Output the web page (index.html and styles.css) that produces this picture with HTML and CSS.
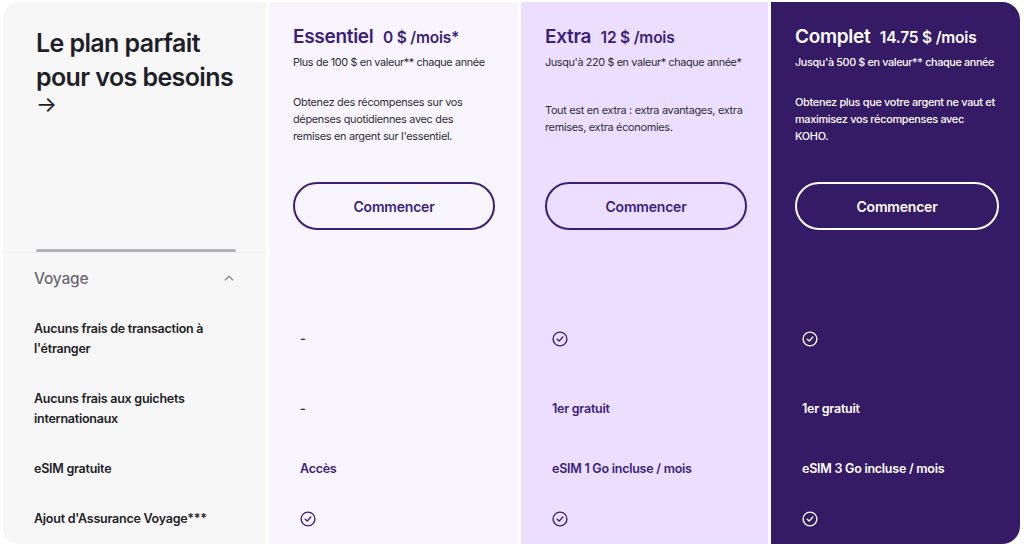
FILE: index.html
```html
<!DOCTYPE html>
<html lang="fr">
<head>
<meta charset="utf-8">
<title>Plans KOHO</title>
<link rel="stylesheet" href="styles.css">
</head>
<body>
<div class="table">
  <div class="col col-label">
    <div class="head head-label">
      <h1 class="page-title">Le plan parfait<br>pour vos besoins<span class="arrow">→</span></h1>
      <div class="rule"></div>
    </div>
    <div class="section">
      <span class="section-name">Voyage</span>
      <svg class="chev" width="10" height="6" viewBox="0 0 10 6"><path d="M1 5.2 L5 1.2 L9 5.2" fill="none" stroke="#8a8a90" stroke-width="1.3"/></svg>
    </div>
    <div class="row r2">Aucuns frais de transaction à<br>l'étranger</div>
    <div class="row r2">Aucuns frais aux guichets<br>internationaux</div>
    <div class="row r1">eSIM gratuite</div>
    <div class="row r1">Ajout d'Assurance Voyage***</div>
  </div>

  <div class="col plan plan-ess">
    <div class="head">
      <h2 class="plan-title">Essentiel <span class="price">0 $ /mois*</span></h2>
      <p class="plan-sub">Plus de 100 $ en valeur** chaque année</p>
      <div class="plan-desc"><p>Obtenez des récompenses sur vos<br>dépenses quotidiennes avec des<br>remises en argent sur l'essentiel.</p></div>
      <a class="btn">Commencer</a>
    </div>
    <div class="section"></div>
    <div class="row r2 val"><span class="dash">-</span></div>
    <div class="row r2 val"><span class="dash">-</span></div>
    <div class="row r1 val"><span class="strong">Accès</span></div>
    <div class="row r1 val"><svg class="check" width="16" height="16" viewBox="0 0 16 16"><circle cx="8" cy="8" r="6.9" fill="none" stroke="currentColor" stroke-width="1.4"/><path d="M5.2 8.2 L7.2 10.1 L10.8 6" fill="none" stroke="currentColor" stroke-width="1.4" stroke-linecap="round" stroke-linejoin="round"/></svg></div>
  </div>

  <div class="col plan plan-extra">
    <div class="head">
      <h2 class="plan-title">Extra <span class="price">12 $ /mois</span></h2>
      <p class="plan-sub">Jusqu'à 220 $ en valeur* chaque année*</p>
      <div class="plan-desc"><p>Tout est en extra : extra avantages, extra<br>remises, extra économies.</p></div>
      <a class="btn">Commencer</a>
    </div>
    <div class="section"></div>
    <div class="row r2 val"><svg class="check" width="16" height="16" viewBox="0 0 16 16"><circle cx="8" cy="8" r="6.9" fill="none" stroke="currentColor" stroke-width="1.4"/><path d="M5.2 8.2 L7.2 10.1 L10.8 6" fill="none" stroke="currentColor" stroke-width="1.4" stroke-linecap="round" stroke-linejoin="round"/></svg></div>
    <div class="row r2 val"><span class="strong">1er gratuit</span></div>
    <div class="row r1 val"><span class="strong">eSIM 1 Go incluse / mois</span></div>
    <div class="row r1 val"><svg class="check" width="16" height="16" viewBox="0 0 16 16"><circle cx="8" cy="8" r="6.9" fill="none" stroke="currentColor" stroke-width="1.4"/><path d="M5.2 8.2 L7.2 10.1 L10.8 6" fill="none" stroke="currentColor" stroke-width="1.4" stroke-linecap="round" stroke-linejoin="round"/></svg></div>
  </div>

  <div class="col plan plan-comp">
    <div class="head">
      <h2 class="plan-title">Complet <span class="price">14.75 $ /mois</span></h2>
      <p class="plan-sub">Jusqu'à 500 $ en valeur** chaque année</p>
      <div class="plan-desc"><p>Obtenez plus que votre argent ne vaut et<br>maximisez vos récompenses avec<br>KOHO.</p></div>
      <a class="btn">Commencer</a>
    </div>
    <div class="section"></div>
    <div class="row r2 val"><svg class="check" width="16" height="16" viewBox="0 0 16 16"><circle cx="8" cy="8" r="6.9" fill="none" stroke="currentColor" stroke-width="1.4"/><path d="M5.2 8.2 L7.2 10.1 L10.8 6" fill="none" stroke="currentColor" stroke-width="1.4" stroke-linecap="round" stroke-linejoin="round"/></svg></div>
    <div class="row r2 val"><span class="strong">1er gratuit</span></div>
    <div class="row r1 val"><span class="strong">eSIM 3 Go incluse / mois</span></div>
    <div class="row r1 val"><svg class="check" width="16" height="16" viewBox="0 0 16 16"><circle cx="8" cy="8" r="6.9" fill="none" stroke="currentColor" stroke-width="1.4"/><path d="M5.2 8.2 L7.2 10.1 L10.8 6" fill="none" stroke="currentColor" stroke-width="1.4" stroke-linecap="round" stroke-linejoin="round"/></svg></div>
  </div>
</div>
</body>
</html>
```

FILE: styles.css
```css
* { box-sizing: border-box; }
html, body { margin: 0; padding: 0; background: #ffffff; }
body {
  font-family: Inter, "Noto Sans", "Liberation Sans", sans-serif;
  color: #222226;
  -webkit-font-smoothing: antialiased;
}
.table {
  display: flex;
  gap: 3px;
  margin: 2px 0 0 3px;
  width: 1017px;
}
.col {
  display: flex;
  flex-direction: column;
}
.col-label {
  width: 263px;
  background: #f7f7f7;
  border-radius: 16px 0 0 16px;
}
.plan { width: 249px; }
.plan-ess { background: #f8f5fe; color: #3b1f78; }
.plan-extra { background: #ecdefe; color: #3b1f78; width: 247px; }
.plan-comp { background: #351a66; color: #ffffff; border-radius: 0 18px 18px 0; width: 249px; }

.head {
  height: 251px;
  display: flex;
  flex-direction: column;
  padding: 23px 18px 0 24px;
}
.head-label {
  padding: 24px 31px 0 33px;
  border-bottom: 1px solid #f0f0f0;
}
.page-title {
  margin: 0;
  font-size: 25px;
  line-height: 34px;
  font-weight: 600;
  letter-spacing: -0.6px;
  color: #1f1f29;
  white-space: nowrap;
}
.arrow {
  display: block;
  font-size: 22px;
  font-weight: 400;
  line-height: 20px;
}
.rule {
  margin-top: auto;
  margin-bottom: 0;
  height: 3px;
  width: 200px;
  background: #b1b1b8;
  border-radius: 2px;
}

.plan-title {
  margin: 0;
  font-size: 19px;
  line-height: 24px;
  font-weight: 600;
  letter-spacing: -0.3px;
  white-space: nowrap;
}
.price {
  font-size: 15.5px;
  margin-left: 5px;
  letter-spacing: -0.2px;
}
.plan-sub {
  margin: 6px 0 0;
  font-size: 10.8px;
  line-height: 14px;
  color: #2a2a30;
  letter-spacing: -0.35px;
  white-space: nowrap;
}
.plan-comp .plan-sub { color: #ffffff; font-weight: 500; }
.plan-desc {
  height: 60px;
  margin-top: 19px;
  display: flex;
  align-items: center;
}
.plan-desc p {
  margin: 0;
  font-size: 10.9px;
  line-height: 17px;
  color: #2f2f35;
  letter-spacing: -0.3px;
  white-space: nowrap;
}
.plan-comp .plan-desc p { color: #ffffff; font-weight: 500; }
.btn {
  margin-top: 33px;
  height: 48px;
  width: 202px;
  border: 2px solid currentColor;
  border-radius: 24px;
  display: flex;
  align-items: center;
  justify-content: center;
  font-size: 14px;
  font-weight: 600;
  letter-spacing: -0.2px;
  cursor: pointer;
}
.plan-comp .btn { width: 204px; }

.section {
  height: 51px;
  display: flex;
  align-items: center;
  justify-content: space-between;
  padding: 0 32px 0 31px;
}
.section-name {
  font-size: 15.5px;
  font-weight: 500;
  color: #6a6a70;
  letter-spacing: -0.2px;
}
.chev { margin-top: -2px; }

.row {
  display: flex;
  align-items: center;
  font-size: 12.5px;
  line-height: 20px;
  font-weight: 600;
  letter-spacing: -0.25px;
}
.r2 { height: 70px; }
.r1 { height: 50px; }
.col-label .row { padding-left: 31px; color: #222226; }
.val { padding-left: 31px; }
.dash { color: #333338; font-weight: 600; }
.strong { font-weight: 600; }
.check { display: block; }
```
